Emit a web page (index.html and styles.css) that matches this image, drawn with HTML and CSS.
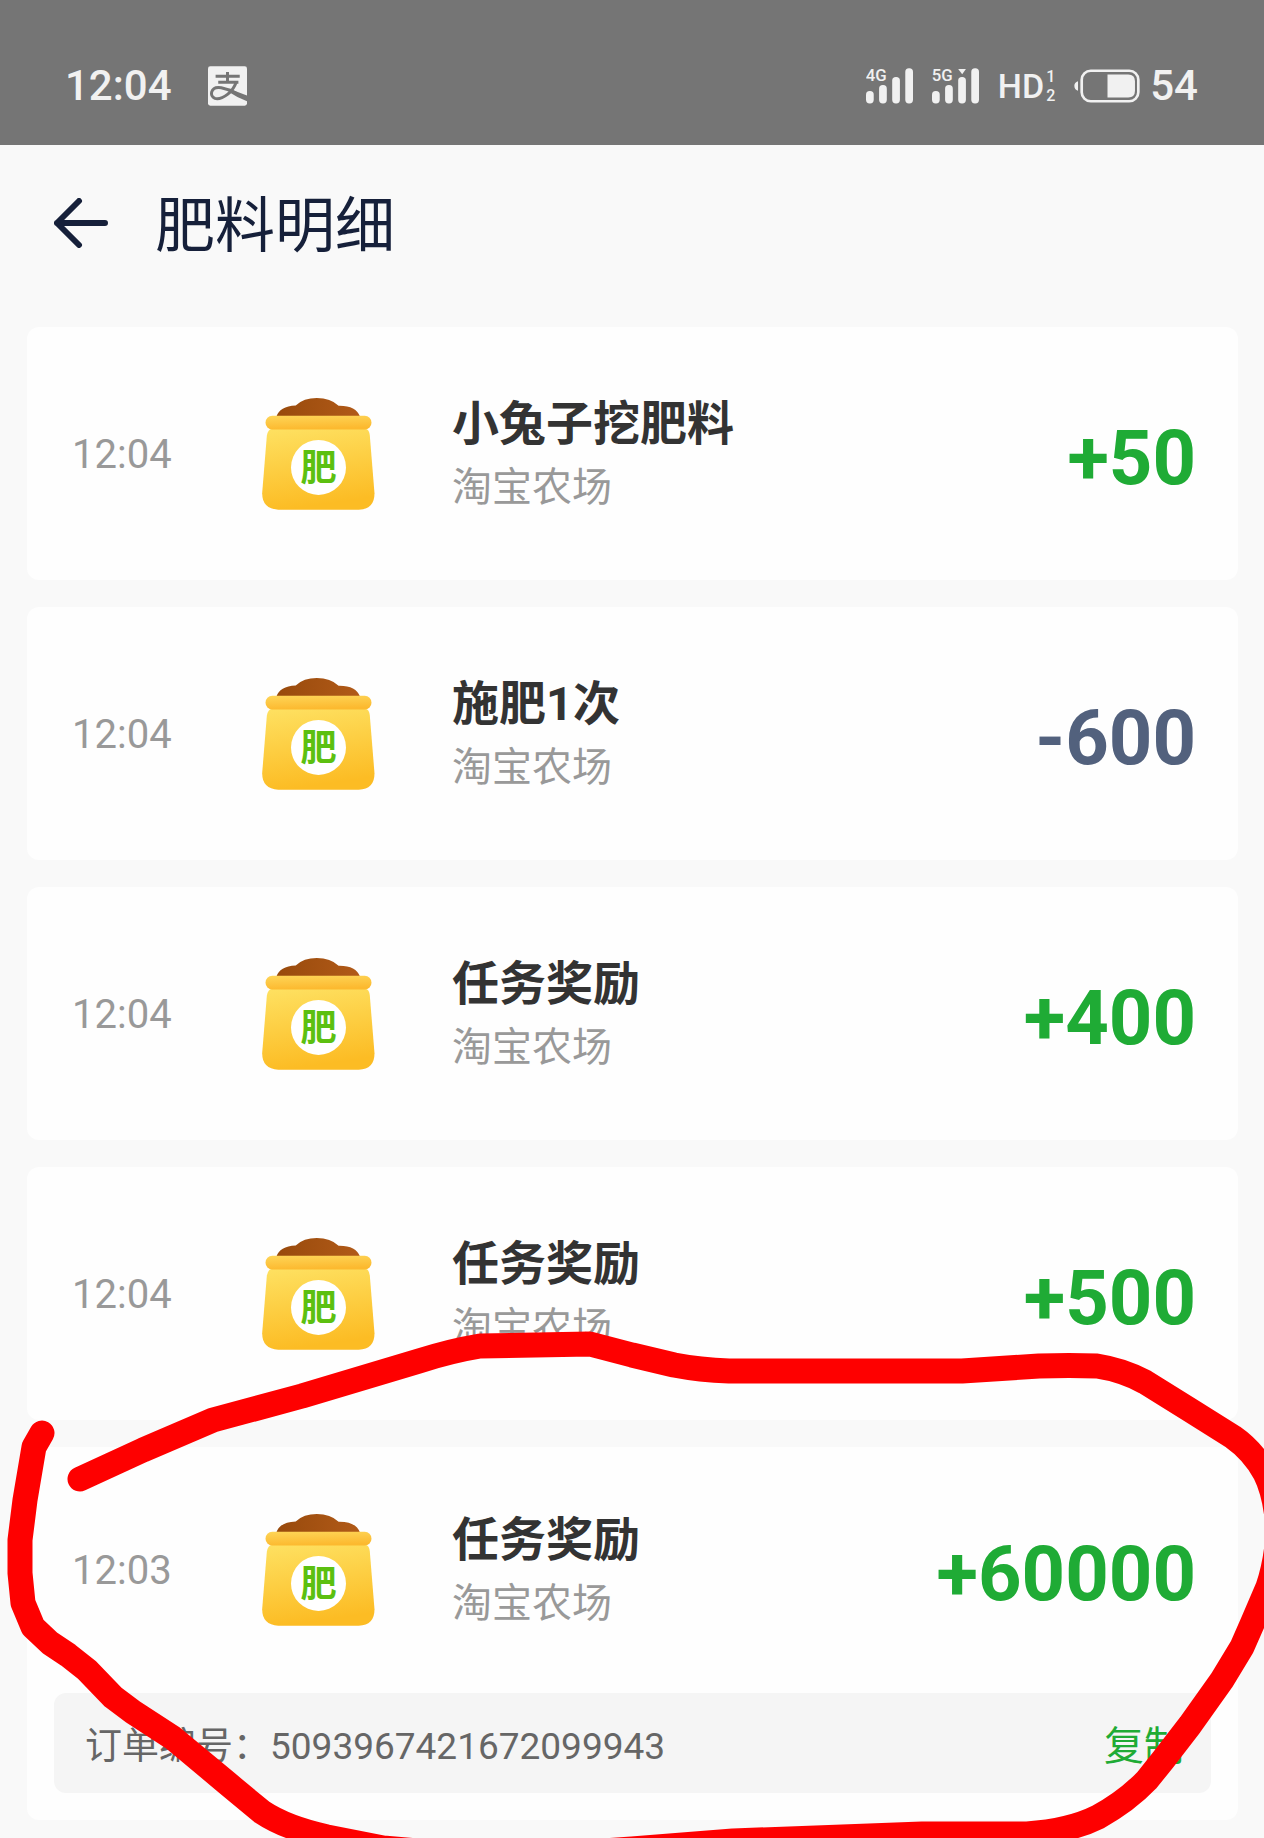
FILE: index.html
```html
<!DOCTYPE html>
<html lang="zh-CN">
<head>
    <meta charset="UTF-8">
    <meta name="viewport" content="width=device-width, initial-scale=1.0">
    <title>肥料明细</title>
    <link rel="stylesheet" href="styles.css">
</head>
<body>

    <!-- sack drawing shared by every row -->
    <svg class="defs" width="0" height="0" aria-hidden="true">
        <defs>
            <linearGradient id="sack-body" x1="0" y1="0" x2="0.2" y2="1">
                <stop offset="0" stop-color="#fee162"/>
                <stop offset="1" stop-color="#fcbc24"/>
            </linearGradient>
            <linearGradient id="sack-rim" x1="0" y1="0" x2="0.2" y2="1">
                <stop offset="0" stop-color="#fed557"/>
                <stop offset="1" stop-color="#fcb92f"/>
            </linearGradient>
            <linearGradient id="sack-soil" x1="0" y1="0" x2="1" y2="0">
                <stop offset="0" stop-color="#984a0c"/>
                <stop offset="1" stop-color="#b15a18"/>
            </linearGradient>
            <symbol id="sack" viewBox="70 54 336 334">
                <path fill="url(#sack-soil)" d="M112 110 Q122 78 170 76 Q194 54 233 54 Q274 54 298 77 Q350 76 362 110 Z"/>
                <path fill="url(#sack-body)" d="M98 146 H379 Q389 148 391 166 L405 338 Q405 386 358 387 H118 Q70 384 70 338 L84 166 Q87 149 98 146 Z"/>
                <rect fill="url(#sack-rim)" x="80" y="107" width="316" height="41" rx="20"/>
                <circle fill="#fff" cx="238" cy="261" r="82"/>
                <text class="sack-text" x="238" y="302" text-anchor="middle">肥</text>
            </symbol>
        </defs>
    </svg>

    <div class="page">
        <div class="status-bar">
            <span class="status-text">12:04</span>
            <svg class="alipay" viewBox="624 198 118 119">
                <rect fill="#f1f1f1" x="624" y="198" width="118" height="119" rx="7"/>
                <g fill="none" stroke="#757575" stroke-width="9">
                    <path d="M647 228 H720 M683 215 V246 M655 246 H716"/>
                    <path d="M710 244 Q702 268 684 282 Q660 300 645 295 Q632 289 635 276 Q640 259 664 263 Q690 268 712 281"/>
                </g>
                <path fill="#757575" d="M688 266 L742 286 V304 Q712 292 690 277 Z"/>
            </svg>
            <div class="status-icons">
                <svg class="signal" viewBox="68 84 140 106" fill="#f1f1f1">
                    <text class="network" x="67" y="122">4G</text>
                    <rect x="68" y="152" width="23" height="37" rx="11"/>
                    <rect x="107" y="134" width="23" height="55" rx="11"/>
                    <rect x="146" y="110" width="23" height="79" rx="11"/>
                    <rect x="185" y="84" width="23" height="105" rx="11"/>
                </svg>
                <svg class="signal" viewBox="266 84 140 106" fill="#f1f1f1">
                    <text class="network" x="265" y="122">5G</text>
                    <rect x="266" y="152" width="23" height="37" rx="11"/>
                    <rect x="305" y="134" width="23" height="55" rx="11"/>
                    <rect x="344" y="110" width="23" height="79" rx="11"/>
                    <path d="M344 86 H367 L356 102 Z"/>
                    <rect x="383" y="84" width="23" height="105" rx="11"/>
                </svg>
                <span class="hd">HD<span class="hd-sim"><span>1</span><span>2</span></span></span>
                <svg class="battery" viewBox="686 86 197 101">
                    <path fill="#f1f1f1" d="M698 122 V151 Q687 148 687 136 Q687 125 698 122 Z"/>
                    <rect fill="none" stroke="#f1f1f1" stroke-width="8" x="709" y="91" width="169" height="91" rx="27"/>
                    <path fill="#f1f1f1" d="M786 102 H848 Q868 102 868 122 V151 Q868 171 848 171 H786 Z"/>
                </svg>
                <span class="status-text">54</span>
            </div>
        </div>

        <header class="header">
            <button class="back" type="button" aria-label="返回">
                <svg viewBox="0 0 54 50">
                    <path d="M25 3 L3 25 L25 47 M3 25 H51"/>
                </svg>
            </button>
            <h1>肥料明细</h1>
        </header>

        <main class="list">
            <div class="card">
                <div class="row">
                    <span class="time">12:04</span>
                    <svg class="sack"><use href="#sack"/></svg>
                    <div class="info">
                        <h2>小兔子挖肥料</h2>
                        <p>淘宝农场</p>
                    </div>
                    <span class="amount">+50</span>
                </div>
            </div>
            <div class="card">
                <div class="row">
                    <span class="time">12:04</span>
                    <svg class="sack"><use href="#sack"/></svg>
                    <div class="info">
                        <h2>施肥1次</h2>
                        <p>淘宝农场</p>
                    </div>
                    <span class="amount minus">-600</span>
                </div>
            </div>
            <div class="card">
                <div class="row">
                    <span class="time">12:04</span>
                    <svg class="sack"><use href="#sack"/></svg>
                    <div class="info">
                        <h2>任务奖励</h2>
                        <p>淘宝农场</p>
                    </div>
                    <span class="amount">+400</span>
                </div>
            </div>
            <div class="card">
                <div class="row">
                    <span class="time">12:04</span>
                    <svg class="sack"><use href="#sack"/></svg>
                    <div class="info">
                        <h2>任务奖励</h2>
                        <p>淘宝农场</p>
                    </div>
                    <span class="amount">+500</span>
                </div>
            </div>
            <div class="card with-order">
                <div class="row">
                    <span class="time">12:03</span>
                    <svg class="sack"><use href="#sack"/></svg>
                    <div class="info">
                        <h2>任务奖励</h2>
                        <p>淘宝农场</p>
                    </div>
                    <span class="amount">+60000</span>
                </div>
                <div class="order">
                    <span>订单编号：5093967421672099943</span>
                    <button class="copy" type="button">复制</button>
                </div>
            </div>
        </main>

        <!-- hand-drawn red circle over the last entry -->
        <svg class="marker" viewBox="0 0 1264 1838" aria-hidden="true">
            <path d="M80 1479 L143 1450 L213 1420 L302 1396 L419 1361 Q450 1351 480 1346 L590 1344 L632 1355 L674 1365 Q700 1370 729 1371 H962 L1039 1366 Q1070 1365 1097 1366 Q1123 1370 1145 1382 L1190 1410 L1233 1437 Q1253 1451 1265 1473 Q1276 1495 1278 1530 Q1277 1560 1268 1587 L1253 1622 L1242 1647 L1222 1680 L1190 1725 L1163 1760 L1147 1780 Q1127 1801 1098 1817 Q1070 1831 1027 1834 H922 L733 1841 L632 1849 L500 1858 L383 1848 L327 1837 Q286 1828 262 1812 L227 1783 L173 1738 L133 1712 L113 1697 L87 1670 L68 1655 L50 1643 L33 1627 L23 1603 L20 1573 V1540 L25 1500 L34 1447 L42 1433"/>
        </svg>
    </div>

</body>
</html>
```
FILE: styles.css
```css
body {
    margin: 0;
    background-color: #f9f9f9;
    font-family: Roboto, "Noto Sans CJK SC", sans-serif;
}
h1, h2, p {
    margin: 0;
}
button {
    padding: 0;
    border: none;
    background: none;
    font-family: inherit;
    cursor: pointer;
}
.defs {
    position: absolute;
}
.page {
    position: relative;
    overflow: hidden;
}

/* status bar */
.status-bar {
    display: flex;
    align-items: center;
    box-sizing: border-box;
    height: 145px;
    padding: 27px 66px 0 65px;
    background-color: #757575;
    color: #f1f1f1;
}
.status-text {
    font-size: 42px;
    font-weight: 500;
    line-height: 48px;
}
.alipay {
    width: 39px;
    height: 40px;
    margin-left: 36px;
}
.status-icons {
    display: flex;
    align-items: center;
    gap: 19px;
    margin-left: auto;
}
.signal {
    width: 47px;
    height: 36px;
}
.network {
    font-size: 50px;
    font-weight: 500;
}
.hd {
    display: flex;
    align-items: center;
    gap: 2px;
    font-size: 34px;
    font-weight: 500;
    line-height: 48px;
}
.hd-sim {
    display: flex;
    flex-direction: column;
    font-size: 16px;
    line-height: 19px;
}
.battery {
    width: 66px;
    height: 34px;
}
.battery + .status-text {
    margin-left: -9px;
}

/* header */
.header {
    display: flex;
    align-items: center;
    gap: 47px;
    height: 156px;
    padding: 0 54px;
}
.back svg {
    display: block;
    width: 54px;
    height: 50px;
    fill: none;
    stroke: #16203a;
    stroke-width: 6;
    stroke-linecap: round;
    stroke-linejoin: round;
}
.header h1 {
    padding-top: 7px;
    color: #16203a;
    font-size: 60px;
    font-weight: 400;
    line-height: 80px;
}

/* list */
.list {
    display: flex;
    flex-direction: column;
    gap: 27px;
    padding: 26px 26px 18px 27px;
}
.card {
    border-radius: 12px;
    background-color: #fefefe;
}
.row {
    display: grid;
    grid-template-columns: 190px 190px 1fr auto;
    align-items: center;
    height: 253px;
    padding: 0 42px 0 45px;
}
.time {
    padding-top: 2px;
    color: #999;
    font-size: 40px;
    line-height: 48px;
}
.sack {
    width: 113px;
    height: 112px;
}
.sack-text {
    fill: #5cc010;
    font-size: 108px;
    font-weight: 700;
}
.info {
    padding-top: 4px;
}
.info h2 {
    color: #333;
    font-size: 47px;
    font-weight: 700;
    line-height: 64px;
}
.info p {
    color: #999;
    font-size: 40px;
    line-height: 64px;
}
.amount {
    padding-top: 8px;
    color: #1fab35;
    font-size: 76px;
    font-weight: 700;
    line-height: 80px;
}
.amount.minus {
    color: #52617d;
}
.with-order {
    padding-bottom: 27px;
}
.with-order .row {
    height: 246px;
}
.order {
    display: flex;
    align-items: center;
    justify-content: space-between;
    height: 100px;
    margin: 0 27px;
    padding: 0 27px 0 31px;
    border-radius: 12px;
    background-color: #f5f5f5;
    color: #666;
    font-size: 37px;
}
.copy {
    color: #1fab35;
    font-size: 40px;
}

.marker {
    position: absolute;
    top: 0;
    left: 0;
    width: 100%;
    pointer-events: none;
}
.marker path {
    fill: none;
    stroke: #fe0000;
    stroke-width: 25;
    stroke-linecap: round;
    stroke-linejoin: round;
}
```
